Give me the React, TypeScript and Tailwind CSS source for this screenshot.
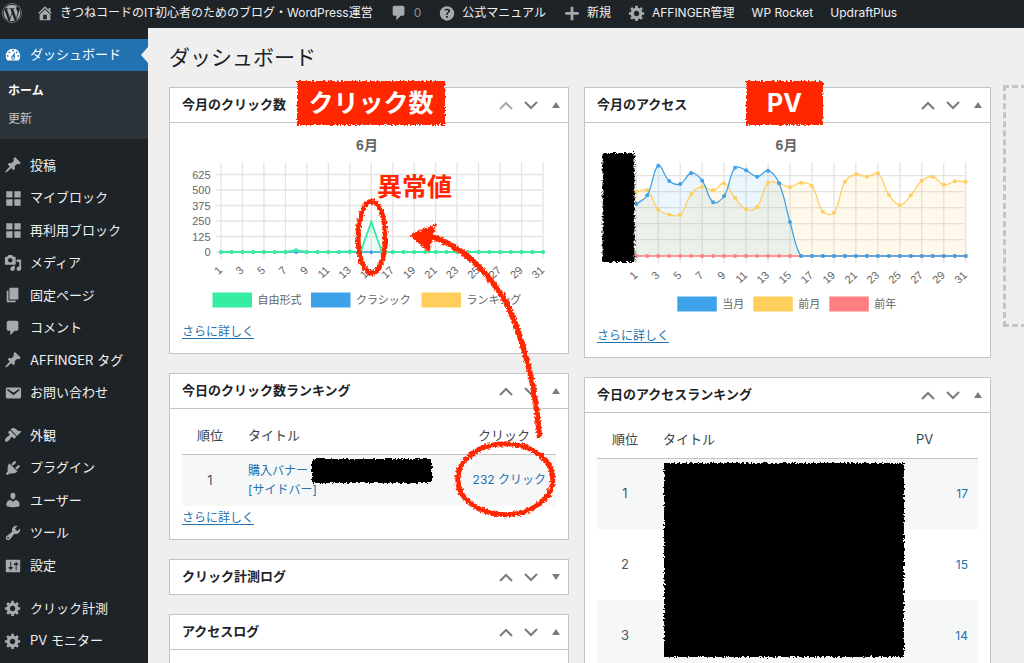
import React from 'react';
import { FaWordpress } from 'react-icons/fa';

const PATHS = {
  dashboard:
    'M3.76 16h12.48c1.1-1.37 1.76-3.11 1.76-5 0-4.42-3.58-8-8-8s-8 3.58-8 8c0 1.89.66 3.63 1.76 5zM10 4c.55 0 1 .45 1 1s-.45 1-1 1-1-.45-1-1 .45-1 1-1zM6 6c.55 0 1 .45 1 1s-.45 1-1 1-1-.45-1-1 .45-1 1-1zm8 0c.55 0 1 .45 1 1s-.45 1-1 1-1-.45-1-1 .45-1 1-1zm-5.37 5.55L12 7v6c0 1.1-.9 2-2 2s-2-.9-2-2c0-.57.24-1.08.63-1.45zM4 10c.55 0 1 .45 1 1s-.45 1-1 1-1-.45-1-1 .45-1 1-1zm12 0c.55 0 1 .45 1 1s-.45 1-1 1-1-.45-1-1 .45-1 1-1zm-5 3c0-.55-.45-1-1-1s-1 .45-1 1 .45 1 1 1 1-.45 1-1z',
  post: 'M10.44 3.02l1.82-1.82 6.36 6.35-1.83 1.82c-1.05-.68-2.48-.57-3.41.36l-.75.75c-.92.93-1.04 2.35-.35 3.41l-1.83 1.82-2.41-2.41-2.8 2.79c-.42.42-3.38 2.71-3.8 2.29s1.86-3.39 2.28-3.81l2.79-2.79L4.1 9.36l1.83-1.82c1.05.69 2.48.57 3.4-.36l.75-.75c.93-.92 1.05-2.35.36-3.41z',
  blocks: 'M2.5 2.5h7v7h-7zM11.5 2.5h7v7h-7zM2.5 11.5h7v7h-7zM11.5 11.5h7v7h-7z',
  media:
    'M13 11V4c0-.55-.45-1-1-1h-1.67L9 1H5L3.67 3H2c-.55 0-1 .45-1 1v7c0 .55.45 1 1 1h10c.55 0 1-.45 1-1zM7 4.5c1.38 0 2.5 1.12 2.5 2.5S8.38 9.5 7 9.5 4.5 8.38 4.5 7 5.62 4.5 7 4.5zM14 6h5v10.5c0 1.38-1.12 2.5-2.5 2.5S14 17.88 14 16.5s1.12-2.5 2.5-2.5c.17 0 .34.02.5.05V9h-3V6zm-4 8.05V13h2v3.5c0 1.38-1.12 2.5-2.5 2.5S7 17.88 7 16.5 8.12 14 9.5 14c.17 0 .34.02.5.05z',
  page: 'M6 15V2h10v13H6zm-1 1h8v2H3V5h2v11z',
  comments: 'M5 2h9c1.1 0 2 .9 2 2v7c0 1.1-.9 2-2 2h-2l-5 5v-5H5c-1.1 0-2-.9-2-2V4c0-1.1.9-2 2-2z',
  email:
    'M3.87 4h13.25C18.37 4 19 4.59 19 5.79v8.42c0 1.19-.63 1.79-1.88 1.79H3.87c-1.25 0-1.88-.6-1.88-1.79V5.79c0-1.2.63-1.79 1.88-1.79zm6.62 8.6l6.74-5.53c.24-.2.43-.66.13-1.07-.29-.41-.82-.42-1.17-.17l-5.7 3.86L4.8 5.83c-.35-.25-.88-.24-1.17.17-.3.41-.11.87.13 1.07z',
  appearance:
    'M14.48 11.06L7.41 3.99l1.5-1.5c.5-.56 2.3-.47 3.51.32 1.21.8 1.43 1.28 2.91 2.1 1.18.64 2.45 1.26 4.45.85zm-.71.71L6.7 4.7 4.93 6.47c-.39.39-.39 1.02 0 1.41l1.06 1.06c.39.39.39 1.03 0 1.42-.6.6-1.43 1.11-2.21 1.69-.35.26-.7.53-1.01.84C1.43 14.23.4 16.08 1.4 17.07c.99 1 2.84-.03 4.18-1.36.31-.31.58-.66.85-1.02.57-.78 1.08-1.61 1.69-2.21.39-.39 1.02-.39 1.41 0l1.06 1.06c.39.39 1.02.39 1.41 0z',
  plugins:
    'M13.11 4.36L9.87 7.6 8 5.73l3.24-3.24c.35-.34 1.05-.2 1.56.32.52.51.66 1.21.31 1.55zm-8 1.77l.91-1.12 9.01 9.01-1.19.84c-.71.71-2.63 1.16-3.82 1.16H6.14L4.9 17.26c-.59.59-1.54.59-2.12 0-.59-.58-.59-1.53 0-2.12l1.24-1.24v-3.88c0-1.13.4-3.19 1.09-3.89zm7.26 3.97l3.24-3.24c.34-.35 1.04-.21 1.55.31.52.51.66 1.21.31 1.55l-3.24 3.25z',
  users:
    'M10 9.25c-2.27 0-2.73-3.44-2.73-3.44C7 4.02 7.82 2 9.97 2c2.16 0 2.98 2.02 2.71 3.81 0 0-.41 3.44-2.68 3.44zm0 2.57L12.72 10c2.39 0 4.52 2.33 4.52 4.53v2.49s-3.65 1.13-7.24 1.13c-3.65 0-7.24-1.13-7.24-1.13v-2.49c0-2.25 1.94-4.48 4.47-4.48z',
  tools:
    'M16.68 9.77c-1.34 1.34-3.3 1.67-4.95.99l-5.41 6.52c-.99.99-2.59.99-3.58 0s-.99-2.59 0-3.57l6.52-5.42c-.68-1.65-.35-3.61.99-4.95 1.28-1.28 3.12-1.62 4.72-1.06l-2.89 2.89 2.82 2.82 2.86-2.87c.53 1.58.18 3.39-1.08 4.65zM3.81 16.21c.4.39 1.04.39 1.43 0 .4-.4.4-1.04 0-1.43-.39-.4-1.03-.4-1.43 0-.39.39-.39 1.03 0 1.43z',
  settings:
    'M18 16V4c0-.55-.45-1-1-1H3c-.55 0-1 .45-1 1v12c0 .55.45 1 1 1h14c.55 0 1-.45 1-1zM8 11h1c.55 0 1 .45 1 1s-.45 1-1 1H8v1.5c0 .28-.22.5-.5.5s-.5-.22-.5-.5V13H6c-.55 0-1-.45-1-1s.45-1 1-1h1V5.5c0-.28.22-.5.5-.5s.5.22.5.5V11zm5-2h-1c-.55 0-1-.45-1-1s.45-1 1-1h1V5.5c0-.28.22-.5.5-.5s.5.22.5.5V7h1c.55 0 1 .45 1 1s-.45 1-1 1h-1v5.5c0 .28-.22.5-.5.5s-.5-.22-.5-.5V9z',
  generic:
    'M18 12h-2.18c-.17.7-.44 1.35-.81 1.93l1.54 1.54-2.1 2.1-1.54-1.54c-.58.36-1.23.63-1.91.79V19H8v-2.18c-.68-.16-1.33-.43-1.91-.79l-1.54 1.54-2.12-2.12 1.54-1.54c-.36-.58-.63-1.23-.79-1.91H1V9.03h2.17c.16-.7.44-1.35.8-1.94L2.43 5.55l2.1-2.1 1.54 1.54c.58-.37 1.24-.64 1.93-.81V2h3v2.18c.68.16 1.33.43 1.91.79l1.54-1.54 2.12 2.12-1.54 1.54c.36.59.64 1.24.8 1.94H18V12zm-8.5 1.5c1.66 0 3-1.34 3-3s-1.34-3-3-3-3 1.34-3 3 1.34 3 3 3z',
  home: 'M16 8.5l1.53 1.53-1.06 1.06L10 4.6l-6.47 6.49-1.06-1.06L10 2.5l4 4v-2h2v4zm-6-2.46l6 5.99V18H4v-5.97zM12 17v-5H8v5h4z',
  plus: 'M17.5 9v3h-6v6h-3v-6h-6V9h6V3h3v6z',
  help: 'M18 10.500a8 8 0 1 0-16 0 8 8 0 0 0 16 0zM10.800 12H9v-.5c0-.44.09-.8.28-1.120s.52-.65 1-1.010c.47-.33.78-.6.93-.81s.23-.45.23-.71c0-.28-.1-.5-.32-.66s-.51-.22-.9-.22c-.66 0-1.430.17-2.290.53l-.73-1.460c1-.56 2.060-.85 3.170-.85.93 0 1.660.23 2.190.66.55.45.81 1.040.81 1.770 0 .49-.1.910-.33 1.270-.22.37-.65.77-1.270 1.210-.43.32-.7.56-.81.72s-.16.39-.16.65zM8.800 14.300c0-.7.4-1.150 1.170-1.150s1.170.45 1.170 1.150-.4 1.130-1.170 1.130-1.170-.43-1.170-1.130z',
};
type IconName = keyof typeof PATHS;

function Dashicon({ name, className = '' }: { name: IconName; className?: string }) {
  return (
    <svg viewBox="0 0 20 20" fill="currentColor" fillRule="evenodd" aria-hidden="true" className={`h-[18px] w-[18px] shrink-0 ${className}`}>
      <path d={PATHS[name]} />
    </svg>
  );
}

function BarLink({ icon, children }: { icon?: IconName; children: React.ReactNode }) {
  return (
    <a href="#" className="flex items-center gap-1.5 whitespace-nowrap">
      {icon && <Dashicon name={icon} className="text-[#a7aaad]" />}
      <span>{children}</span>
    </a>
  );
}

function AdminBar() {
  return (
    <header className="flex h-7 items-center bg-[#1d2327] pb-0.5 pl-0.5 text-xs text-[#f0f0f1]">
      <a href="#" aria-label="WordPress" className="mr-[14px]">
        <FaWordpress className="h-5 w-5 text-[#a7aaad]" />
      </a>
      <nav aria-label="ツールバー" className="flex items-center gap-[17px]">
        <BarLink icon="home">きつねコードのIT初心者のためのブログ・WordPress運営</BarLink>
        <BarLink icon="comments">
          <span className="text-[#8c8f94]">0</span>
        </BarLink>
        <BarLink icon="help">公式マニュアル</BarLink>
        <BarLink icon="plus">新規</BarLink>
        <BarLink icon="generic">AFFINGER管理</BarLink>
        <BarLink>WP Rocket</BarLink>
        <BarLink>UpdraftPlus</BarLink>
      </nav>
    </header>
  );
}

function MenuItem({ icon, label }: { icon: IconName; label: string }) {
  return (
    <li className="flex">
      <a href="#" className="flex flex-1 items-center gap-2 pl-1">
        <Dashicon name={icon} className="text-[#a7aaad]" />
        {label}
      </a>
    </li>
  );
}

function Sidebar() {
  return (
    <nav aria-label="メインメニュー" className="flex w-[148px] shrink-0 flex-col gap-[10px] bg-[#1d2327] pt-[11px] text-[13px] text-[#f0f0f1]">
      <div>
        <a href="#" className="relative flex h-8 items-center gap-2 bg-[#2271b1] pl-1 text-white">
          <Dashicon name="dashboard" />
          ダッシュボード
          <span className="absolute right-0 top-2 border-y-8 border-r-[7px] border-y-transparent border-r-[#efefef]" />
        </a>
        <ul className="bg-[#2c3338] py-1.5 pl-2 text-xs">
          <li className="flex h-7 items-center font-bold text-white">
            <a href="#">ホーム</a>
          </li>
          <li className="flex h-7 items-center text-[#c3c4c7]">
            <a href="#">更新</a>
          </li>
        </ul>
      </div>
      <ul className="grid h-[260px] shrink-0 auto-rows-fr">
        <MenuItem icon="post" label="投稿" />
        <MenuItem icon="blocks" label="マイブロック" />
        <MenuItem icon="blocks" label="再利用ブロック" />
        <MenuItem icon="media" label="メディア" />
        <MenuItem icon="page" label="固定ページ" />
        <MenuItem icon="comments" label="コメント" />
        <MenuItem icon="post" label="AFFINGER タグ" />
        <MenuItem icon="email" label="お問い合わせ" />
      </ul>
      <ul className="grid h-[163px] shrink-0 auto-rows-fr">
        <MenuItem icon="appearance" label="外観" />
        <MenuItem icon="plugins" label="プラグイン" />
        <MenuItem icon="users" label="ユーザー" />
        <MenuItem icon="tools" label="ツール" />
        <MenuItem icon="settings" label="設定" />
      </ul>
      <ul className="grid h-[65px] shrink-0 auto-rows-fr">
        <MenuItem icon="generic" label="クリック計測" />
        <MenuItem icon="generic" label="PV モニター" />
      </ul>
    </nav>
  );
}

function Card({ title, first, collapsed, children }: { title: string; first?: boolean; collapsed?: boolean; children?: React.ReactNode }) {
  const btn = 'flex h-full w-[25px] items-center justify-center';
  return (
    <section className="border border-[#c3c4c7] bg-white">
      <div className="flex h-[34px] items-center pl-3">
        <h2 className="flex-1 text-[13px] font-bold text-[#1d2327]">{title}</h2>
        <button type="button" aria-label="上に移動" className={`${btn} ${first ? 'text-[#a7aaad]' : 'text-[#787c82]'}`}>
          <svg width="14" height="9" viewBox="0 0 14 9" fill="none" stroke="currentColor" strokeWidth="2">
            <path d="M1 8l6-6 6 6" />
          </svg>
        </button>
        <button type="button" aria-label="下に移動" className={`${btn} text-[#787c82]`}>
          <svg width="14" height="9" viewBox="0 0 14 9" fill="none" stroke="currentColor" strokeWidth="2">
            <path d="M1 1l6 6 6-6" />
          </svg>
        </button>
        <button type="button" aria-label="パネルを切り替え" className={`${btn} text-[#787c82]`}>
          <svg width="8" height="6" viewBox="0 0 8 6" fill="currentColor">
            <path d={collapsed ? 'M0 0h8L4 6z' : 'M0 6h8L4 0z'} />
          </svg>
        </button>
      </div>
      {children && <div className="border-t border-[#c3c4c7] px-3 pb-[11px]">{children}</div>}
    </section>
  );
}

function MoreLink() {
  return (
    <a href="#" className="text-xs leading-5 text-[#2271b1] underline underline-offset-2">
      さらに詳しく
    </a>
  );
}

const DAYS = Array.from({ length: 31 }, (_, i) => i);
const CHART_FONT = "font-['Liberation_Sans','Noto_Sans_CJK_JP',sans-serif]";

function smooth(xs: number[], ys: number[]) {
  const t = 0.4;
  const cp = ys.map((y, i) => {
    const p = Math.max(i - 1, 0);
    const n = Math.min(i + 1, ys.length - 1);
    const d1 = Math.hypot(xs[i] - xs[p], y - ys[p]);
    const d2 = Math.hypot(xs[n] - xs[i], ys[n] - y);
    const a = (t * d1) / (d1 + d2);
    const b = (t * d2) / (d1 + d2);
    const low = Math.min(256, Math.max(162, y + b * (ys[n] - ys[p])));
    return {
      px: xs[i] - a * (xs[n] - xs[p]),
      py: y - a * (ys[n] - ys[p]),
      nx: xs[i] + b * (xs[n] - xs[p]),
      ny: low,
    };
  });
  let d = `M${xs[0]} ${ys[0]}`;
  for (let i = 1; i < ys.length; i++) {
    d += `C${cp[i - 1].nx} ${cp[i - 1].ny} ${cp[i].px} ${Math.min(256, cp[i].py)} ${xs[i]} ${ys[i]}`;
  }
  return d;
}

function Grid({ xs, rows, bottom, labelY }: { xs: number[]; rows: number[]; bottom: number; labelY: number }) {
  return (
    <>
      <g stroke="#e5e3e1" strokeWidth="1.300">
        {xs.filter((_, i) => i % 2 === 0).map((x) => (
          <path key={x} d={`M${x} 162.500V${bottom}`} />
        ))}
        {rows.map((y) => (
          <path key={y} d={`M${xs[0] - 5} ${y}H${xs[30]}`} />
        ))}
      </g>
      <g fill="#666" fontSize="11" textAnchor="end">
        {xs.map((x, i) =>
          i % 2 === 0 ? (
            <text key={x} transform={`translate(${x + 2} ${labelY}) rotate(-43)`}>
              {i + 1}
            </text>
          ) : null,
        )}
      </g>
    </>
  );
}

function Legend({ items, y }: { items: { x: number; color: string; label: string }[]; y: number }) {
  return (
    <>
      {items.map((it) => (
        <g key={it.label}>
          <rect x={it.x} y={y} width="39.500" height="15" fill={it.color} />
          <text x={it.x + 45} y={y + 11.5} fill="#666" fontSize="11">
            {it.label}
          </text>
        </g>
      ))}
    </>
  );
}

function ClickChart() {
  const xs = DAYS.map((i) => 221 + i * 10.733);
  const ys = DAYS.map((i) => (i === 14 ? 222 : i === 7 ? 250.3 : i === 12 ? 251.5 : 252));
  const line = 'M' + xs.map((x, i) => `${x} ${ys[i]}`).join('L');
  const rows = [174.5, 190, 205.5, 221, 236.5, 252];
  return (
    <svg viewBox="182 127 374 186" className={`block h-[186px] w-full ${CHART_FONT}`} role="img" aria-label="今月のクリック数">
      <text x="367" y="150" fill="#666" fontSize="14" fontWeight="bold" textAnchor="middle">
        6月
      </text>
      <Grid xs={xs} rows={rows} bottom={259} labelY={271} />
      <g fill="#666" fontSize="11" textAnchor="end">
        {rows.map((y, i) => (
          <text key={y} x="210.500" y={y + 4}>
            {625 - i * 125}
          </text>
        ))}
      </g>
      <path d={`M${xs[0]} 252H${xs[30]}`} stroke="#3ea2e8" strokeWidth="1.500" />
      <g fill="#3ea2e8">
        {DAYS.map((i) => (
          <circle key={i} cx={xs[i]} cy="252.300" r="1.800" />
        ))}
      </g>
      <path d={`${line}L${xs[30]} 252H${xs[0]}Z`} fill="#36eba2" fillOpacity=".1" />
      <path d={line} fill="none" stroke="#36eba2" strokeWidth="1.900" />
      <g fill="#36eba2">
        {DAYS.map((i) => (i === 14 ? <circle key={i} cx={xs[i]} cy="222.500" r="1.500" /> : <circle key={i} cx={xs[i]} cy={ys[i]} r="2" />))}
      </g>
      <circle cx={xs[14]} cy="252.300" r="1.800" fill="#3ea2e8" />
      <Legend
        y={292.5}
        items={[
          { x: 212.5, color: '#36eba2', label: '自由形式' },
          { x: 311, color: '#3ea2e8', label: 'クラシック' },
          { x: 421.5, color: '#ffce5c', label: 'ランキング' },
        ]}
      />
    </svg>
  );
}

const CURRENT = [204, 195.3, 165.7, 181, 184, 173, 180.7, 202.3, 196, 167.7, 170.3, 176.7, 170.7, 183.3, 222, ...Array(16).fill(256)];
const PREVIOUS = [
  191.7, 190.3, 209.7, 214.7, 214.7, 194, 186.7, 190.3, 183.3, 198, 209.3, 207, 182.7, 183.3, 187, 182.7, 186, 211.7, 212.7, 181.7, 174.3,
  176.7, 173.3, 194.7, 205, 195.3, 180.7, 176.7, 184.7, 181.3, 181.7,
];

function AccessChart() {
  const xs = DAYS.map((i) => 636.3 + i * 10.98);
  const cur = smooth(xs, CURRENT);
  const prev = smooth(xs, PREVIOUS);
  const close = `L${xs[30]} 256H${xs[0]}Z`;
  return (
    <svg viewBox="597 127 381 190" className={`block h-[190px] w-full ${CHART_FONT}`} role="img" aria-label="今月のアクセス">
      <text x="786.500" y="150" fill="#666" fontSize="14" fontWeight="bold" textAnchor="middle">
        6月
      </text>
      <Grid xs={xs} rows={[175.7, 191.7, 207.7, 223.7, 239.7, 256]} bottom={263} labelY={276} />
      <path d={prev + close} fill="#ffce5c" fillOpacity=".12" />
      <path d={cur + close} fill="#3ea2e8" fillOpacity=".1" />
      <path d={`M${xs[0]} 256H${xs[30]}`} stroke="#ff8080" strokeWidth="1.500" />
      <g fill="#ff8080">
        {DAYS.map((i) => (
          <circle key={i} cx={xs[i]} cy="256" r="2" />
        ))}
      </g>
      <path d={prev} fill="none" stroke="#ffce5c" strokeWidth="1.200" />
      <g fill="#ffce5c">
        {DAYS.map((i) => (
          <circle key={i} cx={xs[i]} cy={PREVIOUS[i]} r="2" />
        ))}
      </g>
      <path d={cur} fill="none" stroke="#3ea2e8" strokeWidth="1.300" />
      <g fill="#3ea2e8">
        {DAYS.map((i) => (
          <circle key={i} cx={xs[i]} cy={CURRENT[i]} r="2" />
        ))}
      </g>
      <Legend
        y={296.5}
        items={[
          { x: 677.3, color: '#3ea2e8', label: '当月' },
          { x: 753.3, color: '#ffce5c', label: '前月' },
          { x: 829.3, color: '#ff8080', label: '前年' },
        ]}
      />
      <rect x="602.500" y="153" width="32" height="109" filter="url(#rough)" />
    </svg>
  );
}

function RankTable({ valueHead, valueWidth, rowHeight, rows }: { valueHead: string; valueWidth: string; rowHeight: string; rows: { rank: number; title: React.ReactNode; value: string }[] }) {
  return (
    <table className="w-full table-fixed border-collapse text-[#3c434a]">
      <thead>
        <tr className="h-[45px] border-b border-[#c3c4c7] text-[13px]">
          <th scope="col" className="w-14 pt-2 text-center font-normal">順位</th>
          <th scope="col" className="pl-[10px] pt-2 text-left font-normal">タイトル</th>
          <th scope="col" className={`${valueWidth} pl-[10px] pt-2 text-left font-normal`}>{valueHead}</th>
        </tr>
      </thead>
      <tbody>
        {rows.map((r) => (
          <tr key={r.rank} className={`${rowHeight} odd:bg-[#f6f7f7]`}>
            <td className="text-center text-[13px] text-[#50575e]">{r.rank}</td>
            <td className="pl-[10px] text-xs leading-[19px] text-[#2271b1]">{r.title}</td>
            <td className="whitespace-nowrap pr-[10px] text-right text-xs text-[#2271b1]">
              <a href="#">{r.value}</a>
            </td>
          </tr>
        ))}
      </tbody>
    </table>
  );
}

function Stamp({ className, width, children }: { className: string; width: number; children: React.ReactNode }) {
  return (
    <div className={`absolute -top-1.5 grid h-[45px] place-items-center text-[25px] font-bold leading-none text-white ${className}`}>
      <svg width={width} height="45" className="absolute inset-0 overflow-visible" aria-hidden="true">
        <rect width={width} height="44" fill="#ff2600" filter="url(#rough)" />
      </svg>
      <span className="relative">{children}</span>
    </div>
  );
}

export default function App() {
  return (
    <div className="flex h-screen flex-col overflow-hidden bg-[#efefef] font-['Inter','Noto_Sans_CJK_JP',sans-serif]">
      <svg width="0" height="0" className="absolute" aria-hidden="true">
        <filter id="rough" x="-10%" y="-10%" width="120%" height="120%" colorInterpolationFilters="sRGB">
          <feTurbulence type="fractalNoise" baseFrequency="0.45" numOctaves="2" seed="4" result="n" />
          <feDisplacementMap in="SourceGraphic" in2="n" scale="5" xChannelSelector="R" yChannelSelector="G" />
        </filter>
      </svg>
      <AdminBar />
      <div className="flex min-h-0 flex-1">
        <Sidebar />
        <main className="min-w-0 flex-1 pl-[21px]">
          <h1 className="flex h-[59px] items-center pt-px text-[21px] text-[#1d2327]">ダッシュボード</h1>
          <div className="flex items-start">
            <div className="relative mr-[15px] flex min-w-0 flex-[400] flex-col gap-[19px]">
              <Card title="今月のクリック数" first>
                <div className="pt-1">
                  <ClickChart />
                  <div className="mt-[9px] flex">
                    <MoreLink />
                  </div>
                </div>
              </Card>
              <Card title="今日のクリック数ランキング">
                <RankTable
                  valueHead="クリック"
                  valueWidth="w-[88px]"
                  rowHeight="h-[52px]"
                  rows={[{ rank: 1, title: <a href="#">購入バナー<br />[サイドバー]</a>, value: '232 クリック' }]}
                />
                <div className="mt-0.5 flex">
                  <MoreLink />
                </div>
              </Card>
              <Card title="クリック計測ログ" collapsed />
              <Card title="アクセスログ">
                <div className="h-20" />
              </Card>

              <svg viewBox="169 87 400 576" width="400" height="576" className="pointer-events-none absolute left-0 top-0 overflow-visible" aria-hidden="true">
                <rect x="312" y="459" width="120" height="24" filter="url(#rough)" />
                <g filter="url(#rough)" fill="none" stroke="#ff2600" strokeWidth="5">
                  <ellipse cx="371.700" cy="237.300" rx="13.600" ry="36" />
                  <ellipse cx="505.300" cy="479.200" rx="47.500" ry="35.500" />
                  <path d="M539.500 438C537 407 533 382 526.700 360C519 332 510 308 503 297C485 270 463 246 430 236" strokeWidth="5.500" />
                  <path d="M411.500 235L434.500 225.500L428.500 251Z" fill="#ff2600" strokeWidth="2" />
                </g>
              </svg>
              <Stamp className="left-32 w-[148px]" width={148}>クリック数</Stamp>
              <span className="absolute left-[208px] top-[87px] text-[25px] font-bold leading-[27px] text-[#ff2600]">異常値</span>
            </div>

            <div className="relative mr-3 flex min-w-0 flex-[407] flex-col gap-[19px]">
              <Card title="今月のアクセス">
                <div className="pt-1">
                  <AccessChart />
                  <div className="mt-[9px] flex">
                    <MoreLink />
                  </div>
                </div>
              </Card>
              <Card title="今日のアクセスランキング">
                <RankTable
                  valueHead="PV"
                  valueWidth="w-[72px]"
                  rowHeight="h-[71px]"
                  rows={[
                    { rank: 1, title: null, value: '17' },
                    { rank: 2, title: null, value: '15' },
                    { rank: 3, title: null, value: '14' },
                  ]}
                />
              </Card>
              <svg viewBox="584 87 407 576" width="407" height="576" className="pointer-events-none absolute left-0 top-0 overflow-visible" aria-hidden="true">
                <rect x="664" y="463" width="240" height="194" filter="url(#rough)" />
              </svg>
              <Stamp className="left-[162px] w-[77px]" width={77}>PV</Stamp>
            </div>

            <div className="-mt-0.5 h-[242px] w-[21px] shrink-0 overflow-hidden">
              <div className="h-full w-96 border-[3px] border-dashed border-[#c3c4c7]" />
            </div>
          </div>
        </main>
      </div>
    </div>
  );
}
